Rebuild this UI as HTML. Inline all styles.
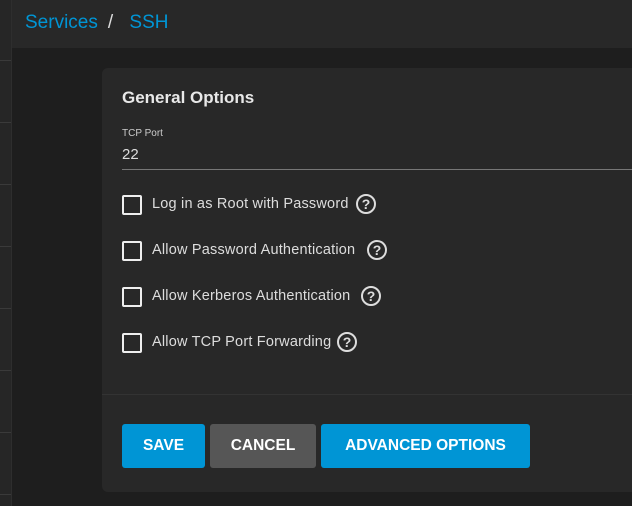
<!DOCTYPE html>
<html><head><style>
body{margin:0;width:632px;height:506px;background:#1e1e1e;font-family:"Liberation Sans",sans-serif;position:relative;overflow:hidden}
.side{position:absolute;left:0;top:0;width:11px;height:506px;background:#262626;border-right:1px solid #2e2e2e}
.side i{position:absolute;left:0;width:11px;height:1px;background:#3a3a3a}
.hdr{position:absolute;left:12px;top:0;right:0;height:48px;background:#282828}
.bc{position:absolute;left:25px;top:12px;font-size:19px;color:#0095d5}
.bc span{color:#ddd;margin:0 11px 0 10px}
.card{position:absolute;left:102px;top:68px;width:540px;height:424px;background:#282828;border-radius:6px}
.t{position:absolute;left:122px;top:88px;font-size:17px;font-weight:bold;color:#e8e8e8}
.lbl{position:absolute;left:122px;top:128px;font-size:10px;color:#ccc}
.val{position:absolute;left:122px;top:146px;font-size:15px;color:#ddd}
.ln{position:absolute;left:122px;top:169px;width:510px;height:1px;background:#777}
.cb{position:absolute;left:122px;width:16px;height:16px;border:2px solid #eee;border-radius:2px}
.cl{position:absolute;left:152px;font-size:14.5px;color:#ddd;letter-spacing:0.2px}
.q{position:absolute;width:16px;height:16px;border:2px solid #ddd;border-radius:50%;color:#ddd;font-size:14px;font-weight:bold;text-align:center;line-height:16px}
.div{position:absolute;left:102px;top:394px;width:530px;height:1px;background:#333}
.b{position:absolute;top:424px;height:44px;border-radius:3px;color:#fff;font-size:15.5px;font-weight:bold;text-align:center;line-height:44px}
</style></head><body>
<div class="side"><i style="top:60px"></i><i style="top:122px"></i><i style="top:184px"></i><i style="top:246px"></i><i style="top:308px"></i><i style="top:370px"></i><i style="top:432px"></i><i style="top:494px"></i></div>
<div class="hdr"></div>
<div class="bc">Services<span>/</span> SSH</div>
<div class="card"></div>
<div class="t">General Options</div>
<div class="lbl">TCP Port</div>
<div class="val">22</div>
<div class="ln"></div>
<div class="cb" style="top:195px"></div><div class="cl" style="top:196px">Log in as Root with Password</div><div class="q" style="left:356px;top:194px">?</div>
<div class="cb" style="top:241px"></div><div class="cl" style="top:242px">Allow Password Authentication</div><div class="q" style="left:367px;top:240px">?</div>
<div class="cb" style="top:287px"></div><div class="cl" style="top:288px">Allow Kerberos Authentication</div><div class="q" style="left:361px;top:286px">?</div>
<div class="cb" style="top:333px"></div><div class="cl" style="top:334px">Allow TCP Port Forwarding</div><div class="q" style="left:337px;top:332px">?</div>
<div class="div"></div>
<div class="b" style="left:122px;width:83px;background:#0095d5">SAVE</div>
<div class="b" style="left:210px;width:106px;background:#565656">CANCEL</div>
<div class="b" style="left:321px;width:209px;background:#0095d5">ADVANCED OPTIONS</div>
</body></html>
